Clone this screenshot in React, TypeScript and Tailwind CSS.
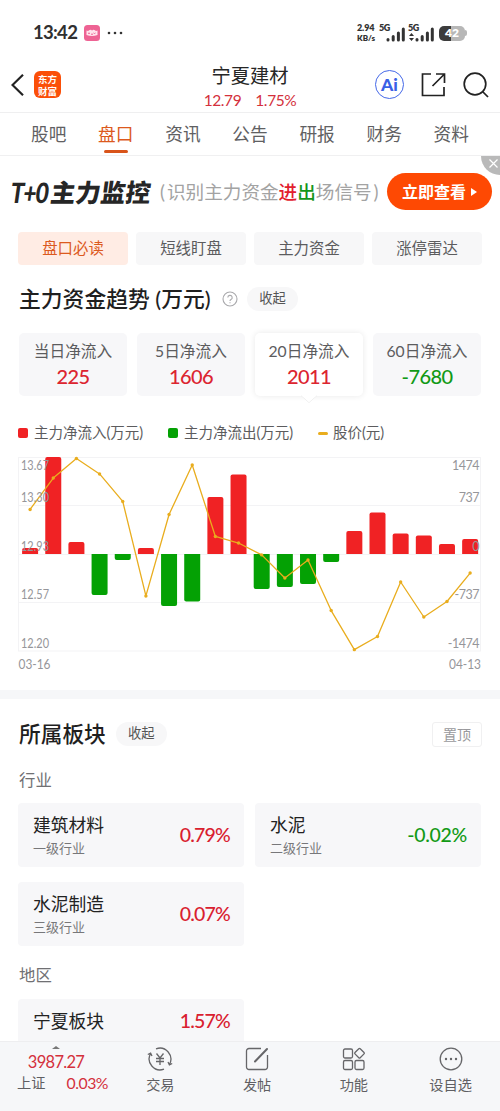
import { ReactNode } from 'react';
import clsx from 'clsx';

const TABS = ['股吧', '盘口', '资讯', '公告', '研报', '财务', '资料'];
const CHIPS = ['盘口必读', '短线盯盘', '主力资金', '涨停雷达'];

const FLOWS = [
  { label: '当日净流入', value: 225 },
  { label: '5日净流入', value: 1606 },
  { label: '20日净流入', value: 2011 },
  { label: '60日净流入', value: -7680 },
];

const NET_FLOW = [91, 1474, 182, -623, -91, 91, -790, -722, 866, 1208, -532, -502, -456, -122, 350, 631, 312, 281, 152, 228];
const PRICES = [
  13.275, 13.514, 13.662, 13.545, 13.336, 12.618, 13.237, 13.613, 13.07, 13.02,
  12.93, 12.754, 12.891, 12.507, 12.21, 12.31, 12.724, 12.458, 12.576, 12.792,
];

const ZERO_Y = 104;
const barX = (i: number) => 30.1 + i * 23.16;
const priceY = (price: number) => 7.5 + (13.67 - price) * 131.6;

// bar with only its outer end rounded
function barPath(i: number, value: number) {
  const x = barX(i) - 8;
  const h = (Math.abs(value) / 1474) * 97;
  const s = value > 0 ? -1 : 1;
  const r = 2;
  return `M${x} ${ZERO_Y}v${s * (h - r)}q0 ${s * r} ${r} ${s * r}h${16 - 2 * r}q${r} 0 ${r} ${-s * r}v${-s * (h - r)}z`;
}

function FlowChart() {
  const leftLabels = [['13.67', 19.5], ['13.30', 52], ['12.93', 100.5], ['12.57', 149], ['12.20', 198]] as const;
  const rightLabels = [['1474', 19.5], ['737', 52], ['0', 100.5], ['-737', 149], ['-1474', 198]] as const;

  return (
    <svg width="500" height="225" viewBox="0 0 500 225" className="block text-[12.5px]">
      <g stroke="#f3f3f5" fill="none">
        <rect x="18.5" y="7.5" width="462" height="193.5" />
        <path d="M18.5 55.5H480.5M18.5 104.5H480.5M18.5 152.5H480.5" />
      </g>
      {NET_FLOW.map((value, i) => (
        <path key={i} d={barPath(i, value)} fill={value > 0 ? '#f02224' : '#04a104'} />
      ))}
      <polyline
        points={PRICES.map((price, i) => `${barX(i)},${priceY(price)}`).join(' ')}
        fill="none"
        stroke="#e9ad1e"
        strokeWidth="1.3"
        strokeLinejoin="round"
      />
      {PRICES.map((price, i) => (
        <circle key={i} cx={barX(i)} cy={priceY(price)} r="1.7" fill="#e9ad1e" />
      ))}
      <g fill="#96969a">
        {leftLabels.map(([text, y]) => (
          <text key={text} x="21" y={y} textLength="28" lengthAdjust="spacingAndGlyphs">{text}</text>
        ))}
        {rightLabels.map(([text, y]) => (
          <text key={text} x="479" y={y} textAnchor="end" className="tracking-[-0.5px]">{text}</text>
        ))}
        <text x="18.5" y="219" textLength="32" lengthAdjust="spacingAndGlyphs">03-16</text>
        <text x="481" y="219" textAnchor="end" textLength="32" lengthAdjust="spacingAndGlyphs">04-13</text>
      </g>
    </svg>
  );
}

function Signal() {
  return (
    <svg width="19" height="15" viewBox="0 0 19 15" stroke="#333" strokeWidth="3" strokeLinecap="round">
      <path d="M2 12.5v.5M7.2 9.5v3.5M12.4 6v7M17.3 2v11" />
    </svg>
  );
}

function StatusBar() {
  return (
    <div className="flex h-[57px] items-end px-[33px] pb-[14px]">
      <div className="flex h-[21px] items-center">
        <span className="w-[45px] pt-px text-[18.5px] font-bold tracking-[-0.7px] text-[#303030]">13:42</span>
        <svg width="16" height="16" viewBox="0 0 16 16" className="ml-[6px]">
          <rect width="16" height="16" rx="3.5" fill="#ee6394" />
          <path d="M2.5 5.5q2 1 2.5-.3Q7.5 4 8 5.8 9 4 11 5.2q.7 1.3 2.5.3V10q-5.500 1.800-11 0z" fill="#ffe3ec" />
          <path d="M4 8q1 1 2 0M9.500 8q1 1 2 0M7 9.200h2" stroke="#ee6394" fill="none" />
        </svg>
        <svg width="16" height="4" viewBox="0 0 16 4" className="ml-[7px]" fill="#333">
          <circle cx="2" cy="2" r="1.300" />
          <circle cx="8" cy="2" r="1.300" />
          <circle cx="14" cy="2" r="1.300" />
        </svg>
      </div>
      <div className="ml-auto flex h-[20px] items-stretch text-[9px] leading-[10px] font-extrabold text-[#333]">
        <div className="w-[22px] whitespace-nowrap">
          <div className="tracking-[-0.1px]">2.94</div>
          <div className="text-[8px]">KB/s</div>
        </div>
        <div className="relative flex w-[26px] items-end justify-end pb-px">
          <span className="absolute top-0 left-0 tracking-[-0.5px]">5G</span>
          <Signal />
        </div>
        <div className="relative ml-[3px] flex w-[26px] items-end justify-end pb-px">
          <span className="absolute top-0 left-0 tracking-[-0.5px]">5G</span>
          <svg width="5" height="8" viewBox="0 0 5 8" fill="#333" className="absolute bottom-[2px] left-[1px]">
            <path d="M0 3 2.500 0 5 3zM0 5h5L2.500 8z" />
          </svg>
          <Signal />
        </div>
        <div className="relative ml-[5px] flex items-center">
          <div className="flex h-[15px] w-[26px] items-center justify-center rounded-[5px] bg-[linear-gradient(90deg,#3c3c3c_45%,#b7b7b7_45%)] text-[12px] text-white">42</div>
          <div className="h-[6px] w-[2px] rounded-r bg-[#b7b7b7]" />
        </div>
      </div>
    </div>
  );
}

function Header() {
  return (
    <header className="relative flex h-[56px] items-center border-b border-[#efeff0] pr-[11px] pl-[11px]">
      <svg width="13" height="22" viewBox="0 0 13 22" fill="none" stroke="#222" strokeWidth="2.200" className="mt-px">
        <path d="M12 .8 1.500 11 12 21.200" />
      </svg>
      <div className="ml-[10px] flex h-[27px] w-[27px] items-center justify-center rounded-[6px] bg-[#fb4f08] text-center font-['Noto_Sans_CJK_SC',sans-serif] text-[9.500px] leading-[12px] font-bold text-white">
        东方
        <br />
        财富
      </div>
      <div className="absolute inset-x-0 top-[8px] flex flex-col items-center">
        <div className="text-[19.300px] leading-[22px] text-[#262626]">宁夏建材</div>
        <div className="mt-[4px] flex gap-[14px] text-[15.500px] leading-[19px] text-[#d4303c]">
          <span className="tracking-[-0.4px]">12.79</span>
          <span className="tracking-[-0.4px]">1.75%</span>
        </div>
      </div>
      <div className="ml-auto flex items-center">
        <div className="flex h-[29px] w-[29px] items-center justify-center rounded-full border-[1.500px] border-[#4468e8] text-[17.500px] leading-none font-black text-[#3960e6]">
          Ai
        </div>
        <svg width="25" height="25" viewBox="0 0 25 25" fill="none" stroke="#222" strokeWidth="1.700" className="ml-[17px]">
          <path d="M10 2H1.500v21.500H23V15M15 2h8.500v9M23.500 2 11.500 14" />
        </svg>
        <svg width="26" height="26" viewBox="0 0 26 26" fill="none" stroke="#222" strokeWidth="1.700" className="ml-[17px]">
          <circle cx="12" cy="12" r="10.800" />
          <path d="m19.500 19.500 5.500 5.500" />
        </svg>
      </div>
    </header>
  );
}

function Banner() {
  return (
    <div className="relative flex h-[76px] items-center pb-[5px] pl-[11px]">
      <div className="flex w-[143px] -skew-x-[8deg] items-center text-[25px] leading-[30px] font-black text-[#262626]">
        <span className="w-[40px] origin-left scale-x-[.8] text-[28px] tracking-[-1px]">T+0</span>
        <span className="whitespace-nowrap">主力监控</span>
      </div>
      <div className="ml-[6px] flex w-[222px] items-center text-[18.600px] leading-[24px] whitespace-nowrap text-[#a3a3a3]">
        <span className="w-[7px]">(</span>识别主力资金
        <span className="font-medium text-[#e2202e]">进</span>
        <span className="font-medium text-[#15961a]">出</span>
        场信号<span className="ml-[2px]">)</span>
      </div>
      <button className="ml-[5px] flex h-[37px] w-[105px] items-center justify-center gap-[5px] rounded-full bg-[#fe4903] text-[16px] font-bold text-white">
        立即查看
        <svg width="6" height="8" viewBox="0 0 6 8" fill="#fff">
          <path d="M0 0 6 4 0 8z" />
        </svg>
      </button>
      <div className="absolute top-0 right-0 h-[19px] w-[19px] rounded-bl-full bg-[#b9b9b9]">
        <svg width="9" height="9" viewBox="0 0 9 9" stroke="#fff" strokeWidth="1.200" className="absolute top-[3px] left-[8px]">
          <path d="m.5.5 8 8M8.500.5l-8 8" />
        </svg>
      </div>
    </div>
  );
}

function FlowCards() {
  return (
    <div className="mx-[19px] grid h-[63px] grid-cols-4 gap-[10px]">
      {FLOWS.map(({ label, value }, i) => (
        <div
          key={label}
          className={clsx(
            'relative flex flex-col items-center rounded-[5px] pt-[8px] whitespace-nowrap',
            i === 2 ? 'bg-white shadow-[0_0_6px_rgba(0,0,0,0.09)]' : 'bg-[#f7f7f9]',
          )}
        >
          <span className="text-[15.700px] leading-[20px] text-[#5c5c5e]">{label}</span>
          <span className={clsx('mt-[4px] text-[20px] leading-[22px] font-medium tracking-[-0.6px]', value > 0 ? 'text-[#dc2530]' : 'text-[#129a16]')}>
            {value}
          </span>
          {i === 2 && (
            <svg width="16" height="8" viewBox="0 0 16 8" className="absolute top-[62px] left-1/2 -translate-x-1/2" fill="#fff">
              <path d="M0 .5 8 7.500 16 .5" stroke="#eee" />
              <path d="M0 0h16L8 7z" />
            </svg>
          )}
        </div>
      ))}
    </div>
  );
}

function Fold() {
  return <span className="flex h-[24px] w-[51px] items-center justify-center rounded-full bg-[#f7f7f8] text-[13.300px] text-[#555]">收起</span>;
}

function BlockCard({ name, level, change }: { name: string; level?: string; change: string }) {
  return (
    <div className="flex h-[64px] justify-between rounded-[4px] bg-[#f7f7f9] pr-[14px] pl-[15px]">
      <div className="flex flex-col pt-[12px]">
        <span className="text-[17.800px] leading-[20px] text-[#222]">{name}</span>
        {level && <span className="mt-[5px] text-[13px] leading-[17px] text-[#77777a]">{level}</span>}
      </div>
      <span
        className={clsx(
          'text-[19.500px] font-medium',
          level ? 'self-center' : 'mt-[9px] leading-[26px]',
          change.startsWith('-') ? 'tracking-[-0.3px] text-[#129a16]' : 'tracking-[-0.8px] text-[#d9202f]',
        )}
      >
        {change}
      </span>
    </div>
  );
}

function NavItem({ label, children }: { label: string; children: ReactNode }) {
  return (
    <div className="flex flex-1 flex-col items-center pt-[4px]">
      <svg width="26" height="26" viewBox="0 0 26 26" fill="none" stroke="#666669" strokeWidth="1.300">
        {children}
      </svg>
      <span className="mt-[3px] text-[14.200px] leading-[20px] text-[#5f5f63]">{label}</span>
    </div>
  );
}

function BottomBar() {
  return (
    <nav className="relative flex h-[70px] border-t border-[#eeeef0] bg-[#f6f7f9]">
      <div className="relative w-[112px]">
        <svg width="8" height="3" viewBox="0 0 8 3" className="absolute top-[4px] left-[52px]">
          <path d="M0 3 4 0l4 3z" fill="#777" />
        </svg>
        <div className="mt-[10px] text-center text-[16.500px] leading-[21px] tracking-[-0.700px] text-[#d4303c]">3987.27</div>
        <div className="flex items-center justify-between pr-[4px] pl-[17px] leading-[20px]">
          <span className="text-[14.200px] text-[#5f5f63]">上证</span>
          <span className="text-[15.800px] tracking-[-0.500px] text-[#d4303c]">0.03%</span>
        </div>
      </div>
      <div className="flex flex-1 pr-px">
        <NavItem label="交易">
          <path d="M3.600 7.500A11 11 0 0 0 17 23.200M9 2.800A11 11 0 0 1 22.400 18.500M.8 8.500l2.800-1.300L5 10M25.200 17.500l-2.800 1.300L21 16" />
          <path d="m9.500 7.500 3.500 4.500 3.500-4.500M13 12v7M9 12.500h8M9 15.500h8" />
        </NavItem>
        <NavItem label="发帖">
          <path d="M17 2.500H5a2.500 2.500 0 0 0-2.500 2.500v16A2.500 2.500 0 0 0 5 23.500h16a2.500 2.500 0 0 0 2.500-2.500V9" />
          <path d="m11 15.500 12-12.500" strokeWidth="2" strokeLinecap="round" />
        </NavItem>
        <NavItem label="功能">
          <rect x="2.500" y="3" width="9" height="9" rx="1.500" />
          <rect x="2.500" y="14.500" width="9" height="9" rx="1.500" />
          <rect x="14" y="14.500" width="9" height="9" rx="1.500" />
          <rect x="14.800" y="3.500" width="7.400" height="7.400" rx="1" transform="rotate(45 18.500 7.200)" />
        </NavItem>
        <NavItem label="设自选">
          <circle cx="13" cy="13" r="10.800" />
          <path d="M8 13h.01M13 13h.01M18 13h.01" strokeWidth="2.400" strokeLinecap="round" />
        </NavItem>
      </div>
    </nav>
  );
}

export default function App() {
  return (
    <div className="flex h-[1111px] w-[500px] flex-col overflow-hidden bg-white font-[Lato,'Noto_Sans_CJK_SC',sans-serif]">
      <StatusBar />
      <Header />
      <div className="flex h-[43px] shrink-0 justify-between border-b border-[#f0f0f1] px-[31px]">
        {TABS.map((tab, i) => (
          <div key={tab} className={clsx('relative pt-[10px] text-[17.700px] leading-[24px]', i === 1 ? 'text-[#dc5a1e]' : 'text-[#606062]')}>
            {tab}
            {i === 1 && <div className="absolute bottom-[2px] left-1/2 h-[3px] w-[24px] -translate-x-1/2 rounded-full bg-[#d9541a]" />}
          </div>
        ))}
      </div>
      <Banner />

      <main className="min-h-0 flex-1 overflow-hidden">
        <div className="mx-[18px] grid h-[33px] grid-cols-4 gap-[8px]">
          {CHIPS.map((chip, i) => (
            <div key={chip} className={clsx('flex items-center justify-center rounded-[4px] text-[15.400px]', i === 0 ? 'bg-[#ffece4] text-[#dc5a1e]' : 'bg-[#f7f7f8] text-[#5c5c5e]')}>
              {chip}
            </div>
          ))}
        </div>

        <div className="flex h-[68px] items-center pl-[19px]">
          <h2 className="w-[194px] text-[21.800px] font-medium whitespace-nowrap text-[#1f1f1f]">主力资金趋势 (万元)</h2>
          <svg width="16" height="16" viewBox="0 0 16 16" fill="none" stroke="#a9a9ac" strokeWidth="1.100" className="mr-[9px] ml-[9px]">
            <circle cx="8" cy="8" r="7" />
            <path d="M5.800 6.500a2.200 2.200 0 1 1 3.200 2Q8 9 8 10M8 11.200v1" />
          </svg>
          <Fold />
        </div>

        <FlowCards />

        <div className="flex h-[54px] items-center pt-[20px] pl-[18px] text-[14.500px] whitespace-nowrap text-[#5c5c5e]">
          <i className="mr-[6px] h-[10px] w-[10px] rounded-[2px] bg-[#f02224]" />
          <span className="w-[134px]">主力净流入(万元)</span>
          <i className="mr-[6px] h-[10px] w-[10px] rounded-[2px] bg-[#04a104]" />
          <span className="w-[134px]">主力净流出(万元)</span>
          <i className="mr-[5px] h-[3px] w-[10px] rounded-full bg-[#e9ad1e]" />
          <span>股价(元)</span>
        </div>

        <FlowChart />
        <div className="mt-[15px] h-[9px] bg-[#f6f7f9]" />

        <div className="flex h-[70px] items-center pr-[18px] pl-[19px]">
          <h2 className="mr-[10px] text-[21.700px] font-medium text-[#1f1f1f]">所属板块</h2>
          <Fold />
          <span className="ml-auto flex h-[25px] w-[50px] items-center justify-center rounded-[3px] border border-[#f0f0f1] text-[14px] text-[#99999c]">置顶</span>
        </div>
        <div className="h-[34px] pl-[19px] text-[16.400px] leading-[21px] text-[#707073]">行业</div>
        <div className="mr-[19px] ml-[18px] grid grid-cols-2 gap-x-[11px] gap-y-[15px]">
          <BlockCard name="建筑材料" level="一级行业" change="0.79%" />
          <BlockCard name="水泥" level="二级行业" change="-0.02%" />
          <BlockCard name="水泥制造" level="三级行业" change="0.07%" />
        </div>
        <div className="mt-[18px] h-[35px] pl-[19px] text-[16.400px] leading-[22px] text-[#707073]">地区</div>
        <div className="mr-[19px] ml-[18px] grid grid-cols-2 gap-x-[11px]">
          <BlockCard name="宁夏板块" change="1.57%" />
        </div>
      </main>
      <BottomBar />
    </div>
  );
}
